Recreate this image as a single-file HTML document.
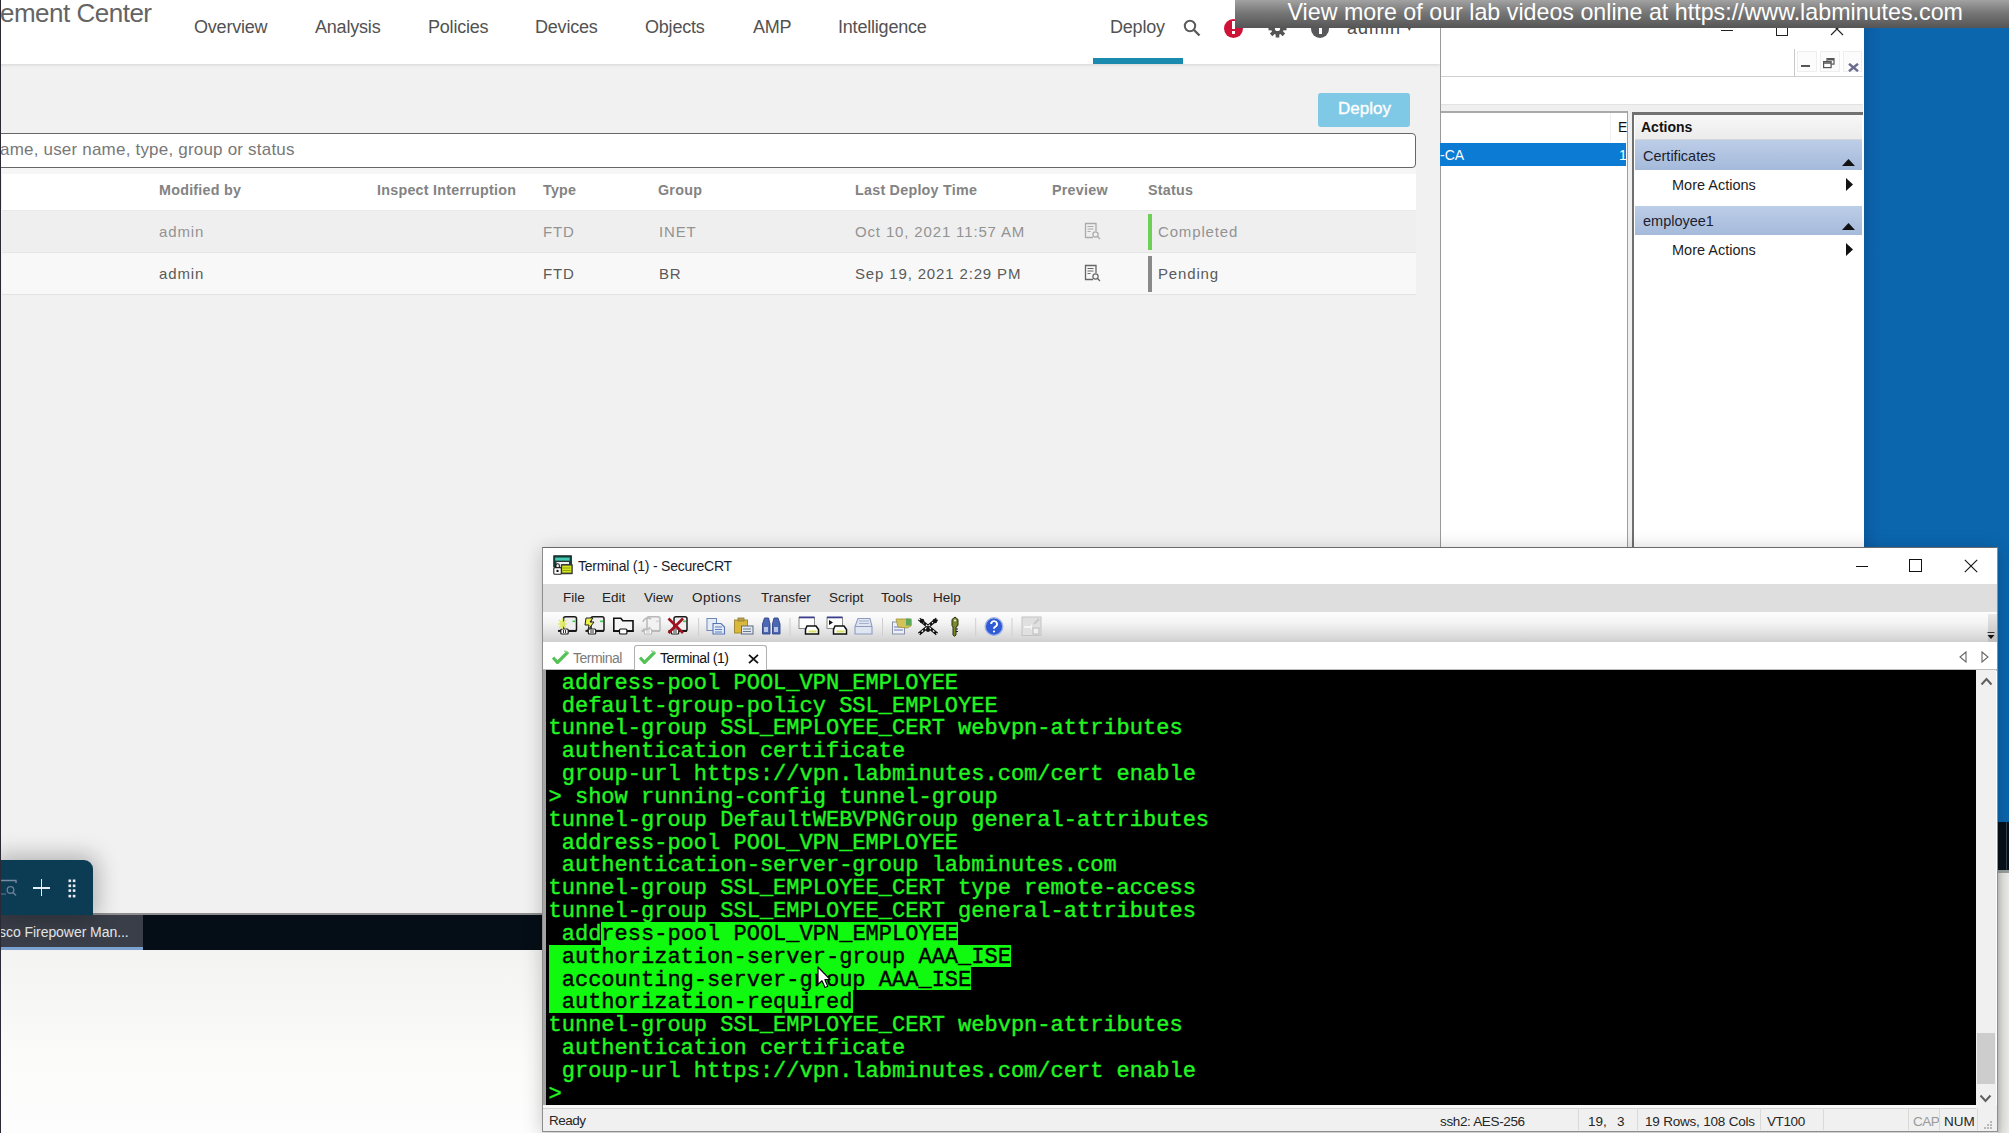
<!DOCTYPE html>
<html><head><meta charset="utf-8">
<style>
*{box-sizing:border-box;margin:0;padding:0}
html,body{width:2009px;height:1133px;overflow:hidden;background:#f0f0f0;font-family:"Liberation Sans",sans-serif}
.a{position:absolute}
.t{position:absolute;white-space:pre;line-height:1}
/* FMC */
#fmc{left:0;top:0;width:1440px;height:1133px;background:#f1f1f1}
#hdr{left:0;top:0;width:1440px;height:64px;background:#fff;box-shadow:0 1px 3px rgba(0,0,0,.12)}
.nav{font-size:18px;color:#525252;top:18px;letter-spacing:-0.2px}
.th{font-size:14.3px;font-weight:bold;color:#838383;top:183px;letter-spacing:0.25px}
.r1{font-size:15px;color:#939393;top:224px;letter-spacing:0.85px}
.r2{font-size:15px;color:#5a5a5a;top:266px;letter-spacing:0.85px}
/* MMC */
#mmc{left:1440px;top:0;width:424px;height:547px;background:#fff;border-left:1px solid #9a9a9a}
#desk{left:1864px;top:0;width:145px;height:822px;background:linear-gradient(90deg,#0a5a9e 0px,#0b62aa 10px,#0b66ae 18px,#0b66ae)}
/* CRT */
#crt{left:542px;top:547px;width:1456px;height:585px;background:#fff;border:1px solid #8d8d8d;border-top-color:#6a6a6a;box-shadow:0 3px 18px rgba(0,0,0,.22)}
.mn{font-size:13.5px;color:#222;top:591px}
#term{left:546px;top:670px;width:1430px;height:435px;background:#000}
.hk{color:#000;-webkit-text-stroke:0.4px #000}
.ln{position:absolute;left:548.5px;font-family:"Liberation Mono",monospace;font-size:22.03px;color:#22f522;white-space:pre;line-height:22.85px;height:22.85px;-webkit-text-stroke:0.4px}
.st{font-size:13.5px;color:#262626;top:1114.5px}
#banner{left:1235px;top:0;width:774px;height:27.6px;background:linear-gradient(#a2a2a2,#777 45%,#555);border-bottom-left-radius:3px}
</style></head>
<body>
<div id="fmc" class="a"></div>
<div id="hdr" class="a"></div>
<div class="t" style="left:0px;top:-0.3px;font-size:26px;letter-spacing:-0.5px;color:#646464">ement Center</div>
<div class="t nav" style="left:194px">Overview</div>
<div class="t nav" style="left:315px">Analysis</div>
<div class="t nav" style="left:428px">Policies</div>
<div class="t nav" style="left:535px">Devices</div>
<div class="t nav" style="left:645px">Objects</div>
<div class="t nav" style="left:753px">AMP</div>
<div class="t nav" style="left:838px">Intelligence</div>
<div class="t nav" style="left:1110px">Deploy</div>
<div class="a" style="left:1093px;top:58px;width:90px;height:6px;background:#1a8aae"></div>

<div class="t" style="left:1183px;top:19px"><svg width="18" height="18" viewBox="0 0 18 18"><circle cx="7" cy="7" r="5.2" fill="none" stroke="#5a5a5a" stroke-width="2"/><line x1="11" y1="11" x2="16.5" y2="16.5" stroke="#5a5a5a" stroke-width="2.4"/></svg></div>
<div class="a" style="left:1224px;top:18.5px;width:19px;height:19px;border-radius:50%;background:#cf1237"></div>
<div class="a" style="left:1231.5px;top:21px;width:3.5px;height:8px;background:#fff"></div><div class="a" style="left:1231.5px;top:30.5px;width:3.5px;height:3px;background:#fff"></div>
<div class="t" style="left:1268px;top:19px"><svg width="19" height="19" viewBox="0 0 19 19"><g transform="translate(9.5 9.5)" fill="#555"><circle r="6.2"/><rect x="-1.8" y="-9" width="3.6" height="18"/><rect x="-1.8" y="-9" width="3.6" height="18" transform="rotate(45)"/><rect x="-1.8" y="-9" width="3.6" height="18" transform="rotate(90)"/><rect x="-1.8" y="-9" width="3.6" height="18" transform="rotate(135)"/></g><circle cx="9.5" cy="9.5" r="2.6" fill="#fff"/></svg></div>
<div class="a" style="left:1311px;top:20px;width:18px;height:18px;border-radius:50%;background:#58585b"></div>
<div class="a" style="left:1319px;top:26px;width:3px;height:8px;background:#fff"></div>
<div class="t" style="left:1347px;top:19px;font-size:18px;letter-spacing:1px;color:#4b4b4b">admin</div>
<div class="t" style="left:1407px;top:24px;font-size:9px;color:#4b4b4b">&#9662;</div>

<div class="a" style="left:1318px;top:93px;width:92px;height:34px;border-radius:3px;background:#7fc9e6"></div>
<div class="t" style="left:1338px;top:100px;font-size:17px;color:#fff;-webkit-text-stroke:0.35px #fff">Deploy</div>

<div class="a" style="left:-4px;top:133px;width:1420px;height:35px;background:#fff;border:1px solid #666;border-radius:4px"></div>
<div class="t" style="left:0px;top:141px;font-size:17px;letter-spacing:0.2px;color:#787878">ame, user name, type, group or status</div>

<div class="a" style="left:2px;top:168px;width:1414px;height:6px;background:#f6f6f6"></div>
<div class="a" style="left:2px;top:174px;width:1414px;height:36px;background:#fff"></div>
<div class="a" style="left:2px;top:210px;width:1414px;height:42px;background:#efefef;border-top:1px solid #e8e8e8"></div>
<div class="a" style="left:2px;top:252px;width:1414px;height:43px;background:#f8f8f8;border-top:1px solid #e6e6e6;border-bottom:1px solid #e3e3e3"></div>

<div class="t th" style="left:159px">Modified by</div>
<div class="t th" style="left:377px">Inspect Interruption</div>
<div class="t th" style="left:543px">Type</div>
<div class="t th" style="left:658px">Group</div>
<div class="t th" style="left:855px">Last Deploy Time</div>
<div class="t th" style="left:1052px">Preview</div>
<div class="t th" style="left:1148px">Status</div>

<div class="t r1" style="left:159px">admin</div>
<div class="t r1" style="left:543px">FTD</div>
<div class="t r1" style="left:659px">INET</div>
<div class="t r1" style="left:855px">Oct 10, 2021 11:57 AM</div>
<div class="t r1" style="left:1158px">Completed</div>
<div class="a" style="left:1148px;top:214px;width:4px;height:36px;background:#6bd054"></div>

<div class="t r2" style="left:159px">admin</div>
<div class="t r2" style="left:543px">FTD</div>
<div class="t r2" style="left:659px">BR</div>
<div class="t r2" style="left:855px">Sep 19, 2021 2:29 PM</div>
<div class="t r2" style="left:1158px">Pending</div>
<div class="a" style="left:1148px;top:256px;width:4px;height:36px;background:#8a8a8a"></div>

<div class="t" style="left:1084px;top:222px"><svg width="18" height="18" viewBox="0 0 18 18"><path d="M12 9 V1.5 H1.5 V15.5 H9" fill="none" stroke="#aaa" stroke-width="1.3"/><path d="M3.5 4.5h6M3.5 7h6M3.5 9.5h3" stroke="#aaa" stroke-width="1.2"/><circle cx="11.5" cy="12.5" r="2.6" fill="none" stroke="#aaa" stroke-width="1.2"/><line x1="13.3" y1="14.3" x2="16" y2="17" stroke="#aaa" stroke-width="1.3"/></svg></div>
<div class="t" style="left:1084px;top:264px"><svg width="18" height="18" viewBox="0 0 18 18"><path d="M12 9 V1.5 H1.5 V15.5 H9" fill="none" stroke="#666" stroke-width="1.3"/><path d="M3.5 4.5h6M3.5 7h6M3.5 9.5h3" stroke="#666" stroke-width="1.2"/><circle cx="11.5" cy="12.5" r="2.6" fill="none" stroke="#666" stroke-width="1.2"/><line x1="13.3" y1="14.3" x2="16" y2="17" stroke="#666" stroke-width="1.3"/></svg></div>

<div id="mmc" class="a"></div>
<div class="a" style="left:1721px;top:30px;width:12px;height:1px;background:#222"></div>
<div class="a" style="left:1776px;top:22px;width:12px;height:14px;border:1px solid #222"></div>
<div class="t" style="left:1830px;top:22px"><svg width="14" height="14" viewBox="0 0 14 14"><path d="M1 1L13 13M13 1L1 13" stroke="#222" stroke-width="1.1"/></svg></div>
<div class="a" style="left:1794px;top:49px;width:1px;height:28px;background:#c8c8c8"></div>
<div class="a" style="left:1797px;top:51px;width:20px;height:21px;background:#fcfcfc;border:1px solid #eee"></div>
<div class="a" style="left:1820px;top:51px;width:20px;height:21px;background:#fcfcfc;border:1px solid #eee"></div>
<div class="a" style="left:1843px;top:51px;width:19px;height:21px;background:#fcfcfc;border:1px solid #eee"></div>
<div class="a" style="left:1801px;top:65px;width:9px;height:2px;background:#555"></div>
<div class="t" style="left:1823px;top:56px"><svg width="12" height="11" viewBox="0 0 12 11"><rect x="4" y="0.6" width="7" height="5.5" fill="none" stroke="#555" stroke-width="1.2"/><rect x="0.6" y="3.6" width="7.5" height="6" fill="#fcfcfc" stroke="#555" stroke-width="1.2"/><line x1="1" y1="5" x2="8" y2="5" stroke="#555" stroke-width="1.5"/><line x1="4.5" y1="1.7" x2="11" y2="1.7" stroke="#555" stroke-width="1.5"/></svg></div>
<div class="t" style="left:1847.5px;top:58.5px"><svg width="11" height="9" viewBox="0 0 11 9"><path d="M1 0.8L10 8.2M10 0.8L1 8.2" stroke="#6b6b8f" stroke-width="2.4"/></svg></div>
<div class="a" style="left:1441px;top:76px;width:422px;height:1px;background:#cfcfcf"></div>
<div class="a" style="left:1441px;top:104px;width:422px;height:8px;background:#efefef;border-top:1px solid #e2e2e2"></div>
<div class="a" style="left:1441px;top:111px;width:187px;height:2px;background:#a9a9a9"></div>
<div class="a" style="left:1627px;top:111px;width:1px;height:436px;background:#9f9f9f"></div>
<div class="a" style="left:1628px;top:111px;width:4px;height:436px;background:#f0f0f0"></div>
<div class="a" style="left:1632px;top:112px;width:2px;height:435px;background:#6f6f6f"></div>
<div class="a" style="left:1632px;top:112px;width:231px;height:3px;background:#717171"></div>
<div class="a" style="left:1610px;top:113px;width:1px;height:28px;background:#f0eeee"></div>
<div class="t" style="left:1618px;top:120px;font-size:14px;color:#111">E</div>
<div class="a" style="left:1440px;top:143px;width:186px;height:23px;background:#0b7bd4"></div>
<div class="t" style="left:1440px;top:148px;font-size:14px;color:#fff">-CA</div>
<div class="t" style="left:1619px;top:148px;font-size:14px;color:#fff">1</div>
<div class="a" style="left:1635px;top:115px;width:227px;height:25px;background:linear-gradient(#f7f7f7,#ebebeb);border-bottom:1px solid #d6d6d6"></div>
<div class="t" style="left:1641px;top:120px;font-size:14px;font-weight:bold;color:#111">Actions</div>
<div class="a" style="left:1635px;top:140px;width:227px;height:30px;background:linear-gradient(#bccde7,#a5badb)"></div>
<div class="t" style="left:1643px;top:149px;font-size:14.5px;color:#1e1e2e">Certificates</div>
<div class="t" style="left:1841.5px;top:152.5px"><svg width="13" height="7" viewBox="0 0 13 7"><path d="M0 7L6.5 0L13 7Z" fill="#111"/></svg></div>
<div class="t" style="left:1672px;top:178px;font-size:14.5px;color:#1e1e1e">More Actions</div>
<div class="t" style="left:1846px;top:178px"><svg width="7" height="13" viewBox="0 0 7 13"><path d="M0 0L7 6.5L0 13Z" fill="#111"/></svg></div>
<div class="a" style="left:1635px;top:206px;width:227px;height:29px;background:linear-gradient(#bccde7,#a5badb)"></div>
<div class="t" style="left:1643px;top:214px;font-size:14.5px;color:#1e1e2e">employee1</div>
<div class="t" style="left:1841.5px;top:217px"><svg width="13" height="7" viewBox="0 0 13 7"><path d="M0 7L6.5 0L13 7Z" fill="#111"/></svg></div>
<div class="t" style="left:1672px;top:243px;font-size:14.5px;color:#1e1e1e">More Actions</div>
<div class="t" style="left:1846px;top:243px"><svg width="7" height="13" viewBox="0 0 7 13"><path d="M0 0L7 6.5L0 13Z" fill="#111"/></svg></div>
<div id="desk" class="a"></div>

<!-- bottom-left taskbar -->
<div class="a" style="left:0;top:950px;width:542px;height:183px;background:linear-gradient(#f3f4f2,#fbfbfa 60%,#fdfdfd)"></div>
<div class="a" style="left:0;top:913px;width:542px;height:1.5px;background:#8e8e8e"></div>
<div class="a" style="left:0;top:914.5px;width:542px;height:35.5px;background:#050e16"></div>
<div class="a" style="left:0;top:914.5px;width:143px;height:35.5px;background:#393e48;border-bottom:3.5px solid #7aa3d2"></div>
<div class="t" style="left:-1px;top:925px;font-size:14px;letter-spacing:-0.05px;color:#e8e8ea">sco Firepower Man...</div>
<div class="a" style="left:0;top:860px;width:93px;height:54px;background:#0c3b54;border-top-right-radius:9px;box-shadow:0 0 22px 5px rgba(0,0,0,.26)"></div>
<div class="a" style="left:0;top:912px;width:93px;height:2.5px;background:#0c3b54"></div>
<div class="t" style="left:0;top:878px"><svg width="18" height="20" viewBox="0 0 18 20"><path d="M0 2.5h16v2.5" fill="none" stroke="#7a8aa0" stroke-width="1.4"/><path d="M0 16h6" stroke="#55708a" stroke-width="1.2"/><circle cx="10.5" cy="12" r="3.3" fill="none" stroke="#6d8096" stroke-width="1.3"/><line x1="13" y1="14.5" x2="16" y2="17.5" stroke="#6d8096" stroke-width="1.4"/></svg></div>
<div class="a" style="left:33px;top:887px;width:17px;height:1.8px;background:#e6eef6"></div>
<div class="a" style="left:40.6px;top:879px;width:1.8px;height:17px;background:#e6eef6"></div>
<svg class="t" style="left:68px;top:879px" width="9" height="19" viewBox="0 0 9 19"><g fill="#e8eef4"><rect x="0.5" y="0.5" width="2.6" height="2.6"/><rect x="4.8" y="0.5" width="2.6" height="2.6"/><rect x="0.5" y="5.5" width="2.6" height="2.6"/><rect x="4.8" y="5.5" width="2.6" height="2.6"/><rect x="0.5" y="10.3" width="2.6" height="2.6"/><rect x="4.8" y="10.3" width="2.6" height="2.6"/><rect x="0.5" y="15.8" width="2.6" height="2.6"/><rect x="4.8" y="15.8" width="2.6" height="2.6"/></g></svg>
<!-- right strip -->
<div class="a" style="left:1998px;top:822px;width:11px;height:48px;background:#07101a"></div>
<div class="a" style="left:2006px;top:822px;width:1px;height:48px;background:#34424e"></div>
<div class="a" style="left:1998px;top:870px;width:11px;height:263px;background:linear-gradient(90deg,#cfcfcf,#e6e6e2 40%,#efefec)"></div>
<div class="a" style="left:1998px;top:870px;width:11px;height:3px;background:#9a9fa0"></div>
<div class="a" style="left:0;top:0;width:1px;height:1133px;background:#2a2a36"></div>
<div id="crt" class="a"></div>
<!-- title bar -->
<div class="t" style="left:553px;top:555px"><svg width="21" height="20" viewBox="0 0 21 20"><rect x="0.8" y="0.8" width="17.5" height="11" fill="#0e4a42" stroke="#1a1a1a" stroke-width="1"/><rect x="2.2" y="2.6" width="14.5" height="3" fill="#46c9b2"/><rect x="3" y="6.5" width="13.5" height="7" fill="#f0f0f0" stroke="#333" stroke-width="1"/><rect x="7.8" y="9" width="12" height="10.2" rx="1" fill="#3a3a3a"/><rect x="9.2" y="10.6" width="9.2" height="7" fill="#d4e61c"/><path d="M10 13h7.5M10 15.5h7.5" stroke="#8a9a10" stroke-width="0.9"/><rect x="0.8" y="12.6" width="7.5" height="6.6" rx="1" fill="#fff" stroke="#222" stroke-width="1.1"/><path d="M2.6 12.6v-2a1.9 1.9 0 0 1 3.8 0v2" fill="none" stroke="#222" stroke-width="1.1"/><circle cx="4.5" cy="15.9" r="1.2" fill="#111"/></svg></div>
<div class="t" style="left:578px;top:559px;font-size:14px;letter-spacing:-0.22px;color:#1b1b2b">Terminal (1) - SecureCRT</div>
<div class="a" style="left:1856px;top:566px;width:12px;height:1px;background:#111"></div>
<div class="a" style="left:1909px;top:559px;width:13px;height:13px;border:1px solid #111"></div>
<div class="t" style="left:1964px;top:559px"><svg width="14" height="14" viewBox="0 0 14 14"><path d="M0.8 0.8L13.2 13.2M13.2 0.8L0.8 13.2" stroke="#111" stroke-width="1.1"/></svg></div>
<!-- menu -->
<div class="a" style="left:543px;top:584px;width:1454px;height:28px;background:#dedede"></div>
<div class="t mn" style="left:563px">File</div>
<div class="t mn" style="left:602px">Edit</div>
<div class="t mn" style="left:644px">View</div>
<div class="t mn" style="left:692px;letter-spacing:0.4px">Options</div>
<div class="t mn" style="left:761px">Transfer</div>
<div class="t mn" style="left:829px">Script</div>
<div class="t mn" style="left:881px">Tools</div>
<div class="t mn" style="left:933px">Help</div>
<!-- toolbar -->
<div class="a" style="left:543px;top:612px;width:1454px;height:30px;background:linear-gradient(#fdfdfd 0%,#f4f4f4 35%,#dcdcdc 80%,#cfcfcf 100%)"></div>

<svg class="t" style="left:550px;top:612px" width="500" height="30" viewBox="0 0 500 30">
<rect x="13.5" y="4.8" width="13" height="14.5" rx="2" fill="#efefef" stroke="#1a1a1a" stroke-width="1.5"/><rect x="22.5" y="8.5" width="3" height="1.6" fill="#3fcf4f"/><line x1="8" y1="18.9" x2="26.5" y2="18.9" stroke="#1a1a1a" stroke-width="2"/><rect x="10.8" y="17" width="7.4" height="5" rx="1" fill="#fff" stroke="#1a1a1a" stroke-width="1.2"/><line x1="13.5" y1="18" x2="13.5" y2="21" stroke="#1a1a1a" stroke-width="0.9"/><line x1="15.5" y1="18" x2="15.5" y2="21" stroke="#1a1a1a" stroke-width="0.9"/>
<path d="M9 8l7 8M16 8l-7 8M8 12h9M12.5 6v11" stroke="#e2ea6a" stroke-width="1.6"/>
<rect x="41.0" y="4.8" width="13" height="14.5" rx="2" fill="#efefef" stroke="#1a1a1a" stroke-width="1.5"/><rect x="50.0" y="8.5" width="3" height="1.6" fill="#3fcf4f"/><line x1="35.5" y1="18.9" x2="54.0" y2="18.9" stroke="#1a1a1a" stroke-width="2"/><rect x="38.3" y="17" width="7.4" height="5" rx="1" fill="#fff" stroke="#1a1a1a" stroke-width="1.2"/><line x1="41.0" y1="18" x2="41.0" y2="21" stroke="#1a1a1a" stroke-width="0.9"/><line x1="43.0" y1="18" x2="43.0" y2="21" stroke="#1a1a1a" stroke-width="0.9"/>
<path d="M36 6h7l-3 4h4l-6 8 1-5h-4z" fill="#eef04a" stroke="#222" stroke-width="1"/>
<path d="M63.8 6.2h7l2 2.6h10.2v10.5h-19.2z" fill="#f6f6f6" stroke="#111" stroke-width="1.6"/><line x1="63.5" y1="19" x2="83.5" y2="19" stroke="#111" stroke-width="1.8"/><rect x="69.5" y="17" width="7.4" height="5" rx="1" fill="#fff" stroke="#111" stroke-width="1.2"/>
<rect x="97.0" y="4.8" width="13" height="14.5" rx="2" fill="#f2f2f2" stroke="#b8b8b8" stroke-width="1.5"/><rect x="106.0" y="8.5" width="3" height="1.6" fill="#d8d8d8"/><line x1="91.5" y1="18.9" x2="110.0" y2="18.9" stroke="#b8b8b8" stroke-width="2"/><rect x="94.3" y="17" width="7.4" height="5" rx="1" fill="#fff" stroke="#b8b8b8" stroke-width="1.2"/><line x1="97.0" y1="18" x2="97.0" y2="21" stroke="#b8b8b8" stroke-width="0.9"/><line x1="99.0" y1="18" x2="99.0" y2="21" stroke="#b8b8b8" stroke-width="0.9"/>
<path d="M93 10a5 5 0 0 1 8-3M100 15a5 5 0 0 1-7 2" fill="none" stroke="#bbb" stroke-width="1.6"/>
<rect x="124.0" y="4.8" width="13" height="14.5" rx="2" fill="#efefef" stroke="#1a1a1a" stroke-width="1.5"/><rect x="133.0" y="8.5" width="3" height="1.6" fill="#3fcf4f"/><line x1="118.5" y1="18.9" x2="137.0" y2="18.9" stroke="#1a1a1a" stroke-width="2"/><rect x="121.3" y="17" width="7.4" height="5" rx="1" fill="#fff" stroke="#1a1a1a" stroke-width="1.2"/><line x1="124.0" y1="18" x2="124.0" y2="21" stroke="#1a1a1a" stroke-width="0.9"/><line x1="126.0" y1="18" x2="126.0" y2="21" stroke="#1a1a1a" stroke-width="0.9"/>
<path d="M118.5 6.5L133 21M133 6.5L118.5 21" stroke="#a0101e" stroke-width="2.6"/>
<line x1="148.6" y1="6" x2="148.6" y2="24" stroke="#cfcfcf"/>
<rect x="157" y="6.5" width="9.5" height="12" fill="#e6ecf6" stroke="#7088b8" stroke-width="1"/><path d="M163 11.5h8l3.5 3.5v7h-11.5z" fill="#e2e9f5" stroke="#5676b6" stroke-width="1.1"/><path d="M165 15h7M165 17.5h7M165 20h7" stroke="#5d7dc0" stroke-width="1"/>
<rect x="184.5" y="8" width="13" height="13" fill="#dcb83a" stroke="#a08a38" stroke-width="1"/><rect x="188" y="6" width="6" height="3" fill="#c0a040" stroke="#8a7a40" stroke-width="0.8"/><rect x="191.5" y="14" width="11.5" height="8" fill="#e4e8f0" stroke="#5a6a80" stroke-width="1"/><path d="M193 17h8M193 19.5h8" stroke="#6a7a90" stroke-width="1"/>
<path d="M212.5 12l2-6h4l1.5 6v10h-7.5zM222.5 12l1.5-6h4l2 6v10h-7.5z" fill="#4c68b4" stroke="#2e4488" stroke-width="0.9"/><rect x="214" y="15" width="4" height="5" fill="#b8c4e4"/><rect x="224" y="15" width="4" height="5" fill="#b8c4e4"/>
<line x1="240" y1="6" x2="240" y2="24" stroke="#cfcfcf"/>
<rect x="249" y="5.5" width="15.5" height="11" fill="#fff" stroke="#888" stroke-width="1"/><rect x="249" y="4.5" width="15.5" height="1.8" fill="#3c3c8c"/>
<path d="M257 14h9l2.5 3.5v4.5h-13v-4.5z" fill="#fff" stroke="#111" stroke-width="1.5"/><rect x="258.5" y="18.5" width="8" height="2" fill="#d8e060"/>
<rect x="277" y="5.5" width="15.5" height="11" fill="#fff" stroke="#888" stroke-width="1"/><rect x="277" y="4.5" width="15.5" height="1.8" fill="#3c3c8c"/><path d="M279 8v5l4-2.5z" fill="#111"/>
<path d="M285 14h9l2.5 3.5v4.5h-13v-4.5z" fill="#fff" stroke="#111" stroke-width="1.5"/><rect x="286.5" y="18.5" width="8" height="2" fill="#d8e060"/>
<path d="M308 6.5h12l2 8v7.5h-17v-7.5z" fill="#dfe6f2" stroke="#8e9cc0" stroke-width="1.1"/><path d="M305 14.5h17" stroke="#8e9cc0" stroke-width="1"/><path d="M309 9h10M309 11.5h10" stroke="#a4b0cc" stroke-width="1"/>
<line x1="332.5" y1="6" x2="332.5" y2="24" stroke="#cfcfcf"/>
<rect x="342.5" y="10" width="12" height="12" fill="#eef0f8" stroke="#8890a8" stroke-width="1"/><path d="M344 15h9M344 18h9" stroke="#6a7ab8" stroke-width="1"/><path d="M346 7h12l3 1v6l-4 2-9-1z" fill="#d2c25a" stroke="#a09438" stroke-width="0.8"/><rect x="356" y="6.5" width="5.5" height="7" fill="#5aa65a"/>
<path d="M369 7l18 15M387 7l-18 15" stroke="#111" stroke-width="3.4"/><path d="M369 7l18 15M387 7l-18 15" stroke="#fff" stroke-width="1.2" stroke-dasharray="2 2.5"/><circle cx="372" cy="9" r="2.3" fill="#111"/><circle cx="385" cy="9" r="2.3" fill="#111"/><circle cx="378" cy="18" r="2" fill="#111"/>
<path d="M402 7.5l3-2.5 3 2.5v6l-2 1.5v8l-1.5 1.2-1.5-1.2v-8l-1-1.5z" fill="#7a8a2a" stroke="#2a2e12" stroke-width="1"/><circle cx="405" cy="8.5" r="1.1" fill="#eee"/><path d="M406 17h2M406 19.5h2" stroke="#222" stroke-width="1"/>
<line x1="425.7" y1="6" x2="425.7" y2="24" stroke="#cfcfcf"/>
<circle cx="444" cy="14.6" r="8.8" fill="#2f5bd6" stroke="#9fb2e6" stroke-width="1.4"/><path d="M441.2 12a2.9 2.9 0 1 1 4.2 2.6c-1.1.6-1.4 1.1-1.4 2.2" fill="none" stroke="#fff" stroke-width="1.9"/><circle cx="444" cy="19.5" r="1.1" fill="#fff"/>
<line x1="462" y1="6" x2="462" y2="24" stroke="#cfcfcf"/>
<rect x="472" y="5" width="19" height="18.5" fill="#e0e0e0" stroke="#c4c4c4" stroke-width="1"/><path d="M474 14h6l2-2v6l-2-2h-6z" fill="#f4f4f4"/><path d="M484 12l5-5" stroke="#c8c8c8" stroke-width="2"/><rect x="483" y="16" width="6" height="6" fill="#f0f0f0" stroke="#bbb"/>
<path d="M493 0" />
</svg>
<div class="a" style="left:1988px;top:614px;width:9px;height:28px;background:linear-gradient(#e8e8e8,#bdbdbd)"></div><div class="t" style="left:1986px;top:628px"><svg width="10" height="10" viewBox="0 0 10 10"><path d="M1.5 1.5h7" stroke="#333" stroke-width="1"/><path d="M1.5 4h7l-3.5 4z" fill="#111"/></svg></div>
<!-- tabs -->
<div class="a" style="left:543px;top:642px;width:1454px;height:27px;background:#fff"></div>
<div class="a" style="left:543px;top:669px;width:1454px;height:2px;background:#bdbdbd"></div>
<div class="a" style="left:634px;top:645px;width:133px;height:26px;background:#fff;border:1px solid #b0b0b0;border-bottom:none;border-radius:3px 3px 0 0"></div>
<div class="t" style="left:552px;top:650px"><svg width="17" height="14" viewBox="0 0 17 14"><path d="M1 7.5L5.5 12.5L16 2" fill="none" stroke="#55c255" stroke-width="3.2"/><path d="M12 1L16 2" stroke="#9ad89a" stroke-width="1.5"/></svg></div>
<div class="t" style="left:573px;top:651px;font-size:14px;letter-spacing:-0.5px;color:#7b7b7b">Terminal</div>
<div class="t" style="left:639px;top:650px"><svg width="17" height="14" viewBox="0 0 17 14"><path d="M1 7.5L5.5 12.5L16 2" fill="none" stroke="#55c255" stroke-width="3.2"/><path d="M12 1L16 2" stroke="#9ad89a" stroke-width="1.5"/></svg></div>
<div class="t" style="left:660px;top:651px;font-size:14px;letter-spacing:-0.45px;color:#111">Terminal (1)</div>
<div class="t" style="left:748px;top:651px"><svg width="11" height="10" viewBox="0 0 11 10"><path d="M1 0.8L10 9.2M10 0.8L1 9.2" stroke="#111" stroke-width="1.8"/></svg></div>
<div class="t" style="left:1958px;top:650px"><svg width="10" height="12" viewBox="0 0 10 12"><path d="M8 1L2 6L8 11Z" fill="none" stroke="#666" stroke-width="1.1"/></svg></div>
<div class="t" style="left:1980px;top:650px"><svg width="10" height="12" viewBox="0 0 10 12"><path d="M2 1L8 6L2 11Z" fill="none" stroke="#666" stroke-width="1.1"/></svg></div>
<!-- terminal -->
<div id="term" class="a"></div>
<div class="a" style="left:543px;top:670px;width:3px;height:436px;background:#a4a4a4"></div>
<div class="a" style="left:601.37px;top:921.74px;width:356.89px;height:22.84px;background:#10fa10"></div>
<div class="a" style="left:548.50px;top:944.58px;width:462.63px;height:22.84px;background:#10fa10"></div>
<div class="a" style="left:548.50px;top:967.42px;width:422.98px;height:22.84px;background:#10fa10"></div>
<div class="a" style="left:548.50px;top:990.26px;width:304.01px;height:22.84px;background:#10fa10"></div>
<div class="ln" style="top:672.70px"> address-pool POOL_VPN_EMPLOYEE</div>
<div class="ln" style="top:695.54px"> default-group-policy SSL_EMPLOYEE</div>
<div class="ln" style="top:718.38px">tunnel-group SSL_EMPLOYEE_CERT webvpn-attributes</div>
<div class="ln" style="top:741.22px"> authentication certificate</div>
<div class="ln" style="top:764.06px"> group-url https://vpn.labminutes.com/cert enable</div>
<div class="ln" style="top:786.90px">&gt; show running-config tunnel-group</div>
<div class="ln" style="top:809.74px">tunnel-group DefaultWEBVPNGroup general-attributes</div>
<div class="ln" style="top:832.58px"> address-pool POOL_VPN_EMPLOYEE</div>
<div class="ln" style="top:855.42px"> authentication-server-group labminutes.com</div>
<div class="ln" style="top:878.26px">tunnel-group SSL_EMPLOYEE_CERT type remote-access</div>
<div class="ln" style="top:901.10px">tunnel-group SSL_EMPLOYEE_CERT general-attributes</div>
<div class="ln" style="top:923.94px"> add<span class="hk">ress-pool POOL_VPN_EMPLOYEE</span></div>
<div class="ln" style="top:946.78px"><span class="hk"> authorization-server-group AAA_ISE</span></div>
<div class="ln" style="top:969.62px"><span class="hk"> accounting-server-group AAA_ISE</span></div>
<div class="ln" style="top:992.46px"><span class="hk"> authorization-required</span></div>
<div class="ln" style="top:1015.30px">tunnel-group SSL_EMPLOYEE_CERT webvpn-attributes</div>
<div class="ln" style="top:1038.14px"> authentication certificate</div>
<div class="ln" style="top:1060.98px"> group-url https://vpn.labminutes.com/cert enable</div>
<div class="ln" style="top:1083.82px">&gt;</div>
<svg class="t" style="left:817px;top:966px" width="16" height="24" viewBox="0 0 16 24"><path d="M1 1L1 18.5L5 14.8L8 21.5L10.8 20.3L7.9 13.7L13.2 13.7Z" fill="#fff" stroke="#000" stroke-width="1.2" stroke-linejoin="round"/></svg>
<!-- scrollbar -->
<div class="a" style="left:1976px;top:670px;width:20px;height:435px;background:#f0f0f0"></div>
<div class="t" style="left:1980px;top:673px"><svg width="13" height="9" viewBox="0 0 13 9"><path d="M1.5 7.5L6.5 2L11.5 7.5" fill="none" stroke="#606060" stroke-width="2"/></svg></div>
<div class="a" style="left:1977px;top:1033px;width:18px;height:51px;background:#cdcdcd"></div>
<div class="t" style="left:1979px;top:1090px"><svg width="13" height="9" viewBox="0 0 13 9"><path d="M1.5 1.5L6.5 7L11.5 1.5" fill="none" stroke="#606060" stroke-width="2"/></svg></div>
<!-- status bar -->
<div class="a" style="left:543px;top:1105px;width:1454px;height:26px;background:#f0f0f0"></div><div class="a" style="left:543px;top:1105px;width:1433px;height:2.5px;background:#f8f8f8"></div><div class="a" style="left:543px;top:1107.5px;width:1433px;height:1px;background:#d4d4d4"></div>
<div class="t st" style="left:549px;letter-spacing:-0.5px;top:1114px">Ready</div>
<div class="t st" style="left:1440px;letter-spacing:-0.35px">ssh2: AES-256</div>
<div class="t st" style="left:1588px">19,</div><div class="t st" style="left:1617px">3</div>
<div class="t st" style="left:1645px;letter-spacing:-0.2px">19 Rows, 108 Cols</div>
<div class="t st" style="left:1767px;letter-spacing:-0.4px">VT100</div>
<div class="t st" style="left:1913px;letter-spacing:-0.5px;color:#9a9a9a">CAP</div>
<div class="t st" style="left:1944px">NUM</div>
<div class="a" style="left:1578px;top:1108px;width:1px;height:22px;background:#d9d9d9"></div>
<div class="a" style="left:1637px;top:1108px;width:1px;height:22px;background:#d9d9d9"></div>
<div class="a" style="left:1760px;top:1108px;width:1px;height:22px;background:#d9d9d9"></div>
<div class="a" style="left:1823px;top:1108px;width:1px;height:22px;background:#d9d9d9"></div>
<div class="a" style="left:1908px;top:1108px;width:1px;height:22px;background:#d9d9d9"></div>
<div class="a" style="left:1939px;top:1108px;width:1px;height:22px;background:#d9d9d9"></div>
<div class="a" style="left:1977px;top:1108px;width:1px;height:22px;background:#d9d9d9"></div>
<div class="t" style="left:1983px;top:1117px"><svg width="10" height="10" viewBox="0 0 10 10"><g fill="#b8b8b8"><rect x="7" y="1" width="2" height="2"/><rect x="4" y="4" width="2" height="2"/><rect x="7" y="4" width="2" height="2"/><rect x="1" y="7" width="2" height="2"/><rect x="4" y="7" width="2" height="2"/><rect x="7" y="7" width="2" height="2"/></g></svg></div>


<div id="banner" class="a"></div>
<div class="t" style="left:1287.5px;top:1px;font-size:23.25px;color:#fff">View more of our lab videos online at https://www.labminutes.com</div>
</body></html>
